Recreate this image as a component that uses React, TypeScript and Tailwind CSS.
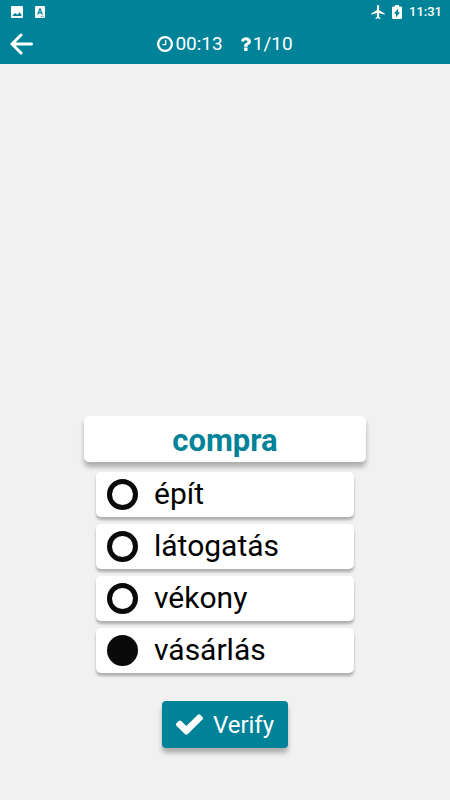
import * as React from "react";
import { cva } from "class-variance-authority";

type IconProps = React.SVGProps<SVGSVGElement>;

const ClockIcon = (props: IconProps) => (
  <svg viewBox="0 128 1536 1536" fill="currentColor" aria-hidden="true" {...props}>
    <path d="M896 544v448q0 14-9 23t-23 9h-320q-14 0-23-9t-9-23v-64q0-14 9-23t23-9h224v-352q0-14 9-23t23-9h64q14 0 23 9t9 23zm416 352q0-148-73-273t-198-198-273-73-273 73-198 198-73 273 73 273 198 198 273 73 273-73 198-198 73-273zm224 0q0 209-103 385.500t-279.500 279.500-385.500 103-385.500-103-279.500-279.500-103-385.500 103-385.500 279.500-279.500 385.500-103 385.500 103 279.500 279.500 103 385.500z" />
  </svg>
);

const QuestionIcon = (props: IconProps) => (
  <svg viewBox="96 128 928 1288" fill="currentColor" aria-hidden="true" {...props}>
    <path d="M704 1136v240q0 16-12 28t-28 12h-240q-16 0-28-12t-12-28v-240q0-16 12-28t28-12h240q16 0 28 12t12 28zm316-600q0 54-15.500 101t-35 76.500-55 59.500-57.500 43.500-61 35.500q-41 23-68.500 65t-27.500 67q0 17-12 32.500t-28 15.500h-240q-15 0-25.500-18.500t-10.500-37.500v-45q0-83 65-156.500t143-108.500q59-27 84-56t25-76q0-42-46.500-74t-107.500-32q-65 0-108 29-35 25-107 115-13 16-31 16-12 0-25-8l-164-125q-13-10-15.500-25t5.500-28q160-266 464-266 80 0 161 31t146 83 106 127.500 41 158.500z" />
  </svg>
);

const CheckIcon = (props: IconProps) => (
  <svg viewBox="121 334 1550 1188" fill="currentColor" aria-hidden="true" {...props}>
    <path d="M1671 566q0 40-28 68l-724 724-136 136q-28 28-68 28t-68-28l-136-136-362-362q-28-28-28-68t28-68l136-136q28-28 68-28t68 28l294 295 656-657q28-28 68-28t68 28l136 136q28 28 28 68z" />
  </svg>
);

const BackIcon = (props: IconProps) => (
  <svg
    viewBox="0 0 24 22"
    fill="none"
    stroke="currentColor"
    strokeWidth="3"
    strokeLinecap="round"
    strokeLinejoin="round"
    aria-hidden="true"
    {...props}
  >
    <path d="M11 2L2 11L11 20M2.500 11H21.500" />
  </svg>
);

const PhotoIcon = (props: IconProps) => (
  <svg viewBox="0 0 12 12" fill="currentColor" aria-hidden="true" {...props}>
    <path
      fillRule="evenodd"
      d="M1.300 0h9.400Q12 0 12 1.300v9.400Q12 12 10.700 12H1.300Q0 12 0 10.700V1.300Q0 0 1.300 0zM1.500 10h9V8.800L8.600 6.200L6.500 8.800L4 7L1.500 9.500z"
    />
  </svg>
);

const KeyboardIcon = (props: IconProps) => (
  <svg viewBox="0 0 10 12" aria-hidden="true" {...props}>
    <rect width="10" height="12" rx="1.200" fill="currentColor" />
    <path
      d="M2.600 8.600L5 2.800L7.400 8.600M3.600 6.800H6.400"
      fill="none"
      stroke="#008299"
      strokeWidth="1.200"
    />
    <path d="M5.500 10.300H9" stroke="#008299" strokeWidth="0.600" />
  </svg>
);

const PlaneIcon = (props: IconProps) => (
  <svg viewBox="2 2 19 20" fill="currentColor" aria-hidden="true" {...props}>
    <path d="M21 16v-2l-8-5V3.500C13 2.670 12.330 2 11.500 2S10 2.670 10 3.500V9l-8 5v2l8-2.500V19l-2 1.500V22l3.500-1 3.500 1v-1.500L13 19v-5.500l8 2.500z" />
  </svg>
);

const BatteryIcon = (props: IconProps) => (
  <svg viewBox="7 2 10 20" fill="currentColor" preserveAspectRatio="none" aria-hidden="true" {...props}>
    <path d="M15.670 4H14V2h-4v2H8.330C7.600 4 7 4.600 7 5.330v15.330C7 21.400 7.600 22 8.330 22h7.330c.74 0 1.340-.6 1.340-1.330V5.330C17 4.600 16.400 4 15.670 4zM11 20v-5.500H9L13 7v5.500h2L11 20z" />
  </svg>
);

const radio = cva("size-[31px] shrink-0 appearance-none rounded-full border-5 border-[#0a0a0a]", {
  variants: {
    checked: {
      true: "bg-[#0a0a0a]",
      false: "bg-white",
    },
  },
});

const OPTIONS = ["épít", "látogatás", "vékony", "vásárlás"];

interface OptionProps {
  label: string;
  checked: boolean;
  onSelect: () => void;
}

const Option = ({ label, checked, onSelect }: OptionProps) => (
  <label className="flex h-[45px] items-center gap-4 rounded-[5px] bg-white px-[11px] shadow-[0_3px_3px_rgba(0,0,0,0.28)]">
    <input
      type="radio"
      name="answer"
      value={label}
      checked={checked}
      onChange={onSelect}
      className={radio({ checked })}
    />
    <span className="pb-[2px] text-[30px] leading-[43px] text-black">{label}</span>
  </label>
);

const Header = () => (
  <header className="bg-[#008299] text-white">
    <div className="flex h-6 items-center justify-between pr-2 pl-[11px]">
      <div className="flex items-center gap-3">
        <PhotoIcon className="size-3" />
        <KeyboardIcon className="h-3 w-[10px]" />
      </div>
      <div className="flex items-center gap-[7px]">
        <PlaneIcon className="size-[14px]" />
        <BatteryIcon className="h-[14px] w-[10px]" />
        <span className="text-[13px] leading-6 font-medium">11:31</span>
      </div>
    </div>
    <div className="grid h-10 grid-cols-[1fr_auto_1fr] items-center px-[10px]">
      <button type="button" aria-label="Back" className="w-6">
        <BackIcon className="h-[22px] w-6" />
      </button>
      <div className="flex items-center gap-[18px] text-[19px] leading-10">
        <span className="flex items-center gap-[2px]">
          <ClockIcon className="size-4" />
          00:13
        </span>
        <span className="flex items-center gap-[2px]">
          <QuestionIcon className="h-[14px] w-[10px]" />
          1/10
        </span>
      </div>
    </div>
  </header>
);

export default function App() {
  const [answer, setAnswer] = React.useState("vásárlás");

  return (
    <div className="flex min-h-screen flex-col bg-[#f1f1f1] font-['Roboto',sans-serif]">
      <Header />
      <main className="flex flex-1 flex-col justify-end px-[84px] pb-[52px]">
        <h1
          id="question"
          className="h-[46px] rounded-[5px] bg-white text-center text-[31px] leading-[49px] font-bold text-[#008299] shadow-[0_5px_5px_rgba(0,0,0,0.28)]"
        >
          compra
        </h1>
        <fieldset aria-labelledby="question" className="mx-3 mt-[10px] flex flex-col gap-[7px]">
          {OPTIONS.map((option) => (
            <Option
              key={option}
              label={option}
              checked={option === answer}
              onSelect={() => setAnswer(option)}
            />
          ))}
        </fieldset>
        <button
          type="button"
          className="mt-7 flex h-[47px] items-center gap-[10px] self-center rounded-[4px] bg-[#008299] px-[14px] text-[24px] text-white shadow-[0_5px_5px_rgba(0,0,0,0.28)]"
        >
          <CheckIcon className="h-[21px] w-[27px]" />
          Verify
        </button>
      </main>
    </div>
  );
}
